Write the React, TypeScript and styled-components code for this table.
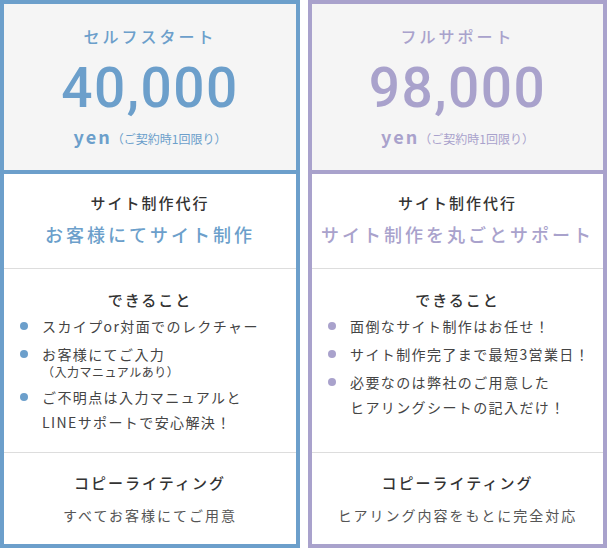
import React from 'react';
import styled, { createGlobalStyle } from 'styled-components';

type Feature = {
  lines: Array<string>;
  sub?: string;
};

type Plan = {
  name: string;
  price: string;
  color: string;
  lead: string;
  features: Array<Feature>;
  copy: string;
};

const plans: Array<Plan> = [
  {
    name: 'セルフスタート',
    price: '40,000',
    color: '#6c9fcb',
    lead: 'お客様にてサイト制作',
    features: [
      { lines: ['スカイプor対面でのレクチャー'] },
      { lines: ['お客様にてご入力'], sub: '（入力マニュアルあり）' },
      { lines: ['ご不明点は入力マニュアルと', 'LINEサポートで安心解決！'] },
    ],
    copy: 'すべてお客様にてご用意',
  },
  {
    name: 'フルサポート',
    price: '98,000',
    color: '#a9a2cc',
    lead: 'サイト制作を丸ごとサポート',
    features: [
      { lines: ['面倒なサイト制作はお任せ！'] },
      { lines: ['サイト制作完了まで最短3営業日！'] },
      { lines: ['必要なのは弊社のご用意した', 'ヒアリングシートの記入だけ！'] },
    ],
    copy: 'ヒアリング内容をもとに完全対応',
  },
];

function PlanCard({ plan }: { plan: Plan }) {
  return (
    <Card $color={plan.color}>
      <Header $color={plan.color}>
        <PlanName $color={plan.color}>{plan.name}</PlanName>
        <Price $color={plan.color}>{plan.price}</Price>
        <Yen $color={plan.color}>
          yen<YenNote>（ご契約時1回限り）</YenNote>
        </Yen>
      </Header>
      <LeadSection>
        <SectionTitle>サイト制作代行</SectionTitle>
        <Lead $color={plan.color}>{plan.lead}</Lead>
      </LeadSection>
      <FeatureSection>
        <SectionTitle>できること</SectionTitle>
        <FeatureList>
          {plan.features.map((f, i) => (
            <FeatureItem key={i} $color={plan.color}>
              <ItemText>
                {f.lines.map((l, j) => (
                  <ItemLine key={j}>{l}</ItemLine>
                ))}
                {f.sub && <ItemSub>{f.sub}</ItemSub>}
              </ItemText>
            </FeatureItem>
          ))}
        </FeatureList>
      </FeatureSection>
      <CopySection>
        <SectionTitle>コピーライティング</SectionTitle>
        <CopyText>{plan.copy}</CopyText>
      </CopySection>
    </Card>
  );
}

export default function App() {
  return (
    <>
      <GlobalStyle />
      <Plans>
        {plans.map((p) => (
          <PlanCard key={p.name} plan={p} />
        ))}
      </Plans>
    </>
  );
}

const GlobalStyle = createGlobalStyle`
  body {
    margin: 0;
    background: #fff;
    font-family: "Noto Sans CJK JP", "Noto Sans", sans-serif;
    color: #444;
  }
`;

const Plans = styled.div`
  display: grid;
  grid-template-columns: 300px 299px;
  column-gap: 8px;
  width: 607px;
`;

const Card = styled.div<{ $color: string }>`
  display: flex;
  flex-direction: column;
  height: 548px;
  box-sizing: border-box;
  border: 4px solid ${(p) => p.$color};
  background: #fff;
  text-align: center;
`;

const Header = styled.div<{ $color: string }>`
  height: 170px;
  box-sizing: border-box;
  padding-top: 20px;
  background: #f5f5f5;
  border-bottom: 4px solid ${(p) => p.$color};
`;

const PlanName = styled.div<{ $color: string }>`
  font-size: 16px;
  line-height: 24px;
  font-weight: 500;
  letter-spacing: 3px;
  color: ${(p) => p.$color};
`;

const Price = styled.div<{ $color: string }>`
  margin-top: 10px;
  font-family: Roboto, sans-serif;
  font-size: 55px;
  line-height: 60px;
  font-weight: 500;
  letter-spacing: 1.5px;
  color: ${(p) => p.$color};
`;

const Yen = styled.div<{ $color: string }>`
  margin-top: 5px;
  font-size: 18px;
  line-height: 26px;
  font-weight: 700;
  letter-spacing: 2px;
  color: ${(p) => p.$color};
`;

const YenNote = styled.span`
  font-size: 12px;
  font-weight: 400;
  letter-spacing: 0;
`;

const LeadSection = styled.div`
  height: 95px;
  box-sizing: border-box;
  padding-top: 16px;
  border-bottom: 1px solid #dddddd;
`;

const SectionTitle = styled.div`
  font-size: 15px;
  line-height: 26px;
  font-weight: 500;
  letter-spacing: 2px;
  color: #333;
`;

const Lead = styled.div<{ $color: string }>`
  margin-top: 3px;
  font-size: 18px;
  line-height: 30px;
  font-weight: 500;
  letter-spacing: 3px;
  color: ${(p) => p.$color};
`;

const FeatureSection = styled.div`
  height: 184px;
  box-sizing: border-box;
  padding-top: 18px;
  border-bottom: 1px solid #dddddd;
`;

const FeatureList = styled.ul`
  list-style: none;
  margin: 1px 0 0;
  padding: 0 0 0 16px;
  text-align: left;
`;

const FeatureItem = styled.li<{ $color: string }>`
  display: grid;
  grid-template-columns: 8px 1fr;
  column-gap: 14px;
  margin-bottom: 3px;
  font-size: 14px;
  line-height: 25px;
  letter-spacing: 1.4px;
  color: #444;

  &::before {
    content: '';
    width: 8px;
    height: 8px;
    margin-top: 8px;
    border-radius: 50%;
    background: ${(p) => p.$color};
  }
`;

const ItemText = styled.span`
  white-space: nowrap;
`;

const ItemLine = styled.span`
  display: block;
`;

const ItemSub = styled.span`
  display: block;
  margin: -2px 0 3px;
  font-size: 12px;
  line-height: 14px;
  letter-spacing: 0.5px;
`;

const CopySection = styled.div`
  flex: 1;
  padding-top: 17px;
`;

const CopyText = styled.div`
  margin-top: 7px;
  font-size: 14px;
  line-height: 24px;
  letter-spacing: 2px;
  color: #555;
`;
